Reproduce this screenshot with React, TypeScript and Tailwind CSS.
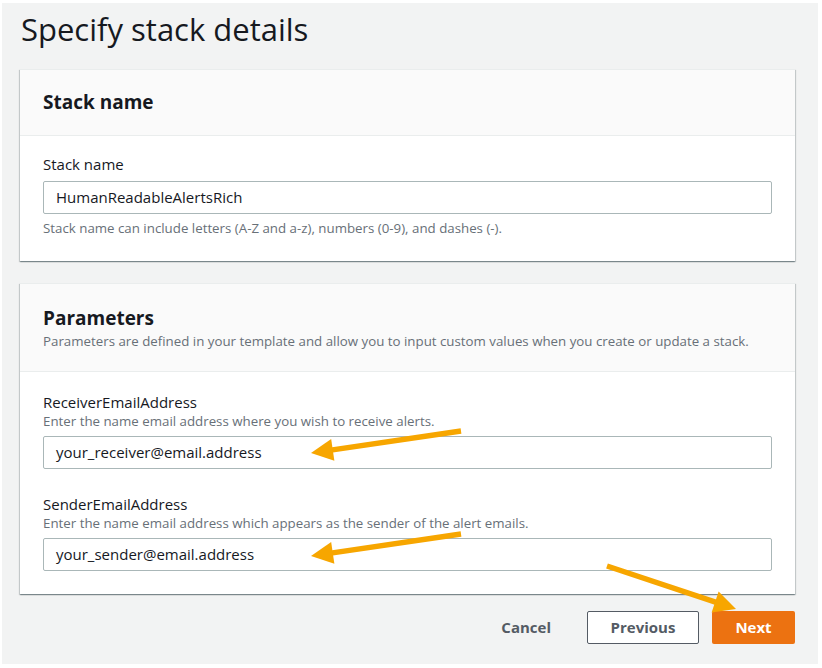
import React from 'react'

type Pt = [number, number]

// orange annotation arrow, tip at `to`
function Arrow({ from, to }: { from: Pt; to: Pt }) {
  const [x1, y1] = from
  const [x2, y2] = to
  const dx = x2 - x1
  const dy = y2 - y1
  const len = Math.sqrt(dx * dx + dy * dy)
  const ux = dx / len
  const uy = dy / len
  const headLen = 22
  const headHalf = 11
  const bx = x2 - ux * headLen
  const by = y2 - uy * headLen
  const p1 = `${bx - uy * headHalf},${by + ux * headHalf}`
  const p2 = `${bx + uy * headHalf},${by - ux * headHalf}`
  return (
    <g>
      <line x1={x1} y1={y1} x2={bx + ux * 2} y2={by + uy * 2} stroke="#f7a600" strokeWidth={5.5} />
      <polygon points={`${x2},${y2} ${p1} ${p2}`} fill="#f7a600" />
    </g>
  )
}

function Field({ label, desc, value }: { label: string; desc?: string; value: string }) {
  return (
    <div className="flex flex-col">
      <div className="text-[15px] leading-[20px] text-[#16191f]">{label}</div>
      {desc && <div className="text-[13.3px] leading-[16px] text-[#687078] mt-px">{desc}</div>}
      <div className="mt-[7px] h-[33px] border border-[#aab7b8] rounded-[2px] bg-white flex items-center px-3 text-[15px] text-[#16191f]">
        {value}
      </div>
    </div>
  )
}

const cardShadow =
  'bg-white shadow-[0_1px_1px_0_rgba(0,28,36,0.3),1px_1px_1px_0_rgba(0,28,36,0.15),-1px_1px_1px_0_rgba(0,28,36,0.15)] border-t border-[#eaeded]'

export default function App() {
  return (
    <div className="relative w-[822px] h-[668px] bg-white pt-[3px] pl-[2px]" style={{ fontFamily: '"Open Sans", "Noto Sans", sans-serif' }}>
      <div className="w-[816px] h-[661px] bg-[#f2f3f3] pl-[18px] pr-[23px] flex flex-col">
        <h1 className="text-[31px] leading-[36px] text-[#16191f] pl-px mt-[8px] mb-[2px]">Specify stack details</h1>

        <div className={`mt-[20px] ${cardShadow}`}>
          <div className="bg-[#fafafa] border-b border-[#eaeded] px-[23px] pt-[19px] pb-[20px]">
            <h2 className="text-[19px] leading-[26px] font-bold text-[#16191f]">Stack name</h2>
          </div>
          <div className="px-[23px] pt-[18px] pb-[25px]">
            <Field label="Stack name" value="HumanReadableAlertsRich" />
            <div className="text-[13.3px] leading-[16px] text-[#687078] mt-[6px]">
              Stack name can include letters (A-Z and a-z), numbers (0-9), and dashes (-).
            </div>
          </div>
        </div>

        <div className={`mt-[22px] ${cardShadow}`}>
          <div className="bg-[#fafafa] border-b border-[#eaeded] px-[23px] pt-[21px] pb-[21px]">
            <h2 className="text-[19px] leading-[26px] font-bold text-[#16191f]">Parameters</h2>
            <p className="text-[13.3px] leading-[18px] text-[#687078] mt-[1px]">
              Parameters are defined in your template and allow you to input custom values when you create or update a stack.
            </p>
          </div>
          <div className="px-[23px] pt-[20px] pb-[23px] flex flex-col gap-[25px]">
            <Field
              label="ReceiverEmailAddress"
              desc="Enter the name email address where you wish to receive alerts."
              value="your_receiver@email.address"
            />
            <Field
              label="SenderEmailAddress"
              desc="Enter the name email address which appears as the sender of the alert emails."
              value="your_sender@email.address"
            />
          </div>
        </div>

        <div className="mt-[17px] flex items-center justify-end gap-[13px]">
          <button className="h-[33px] px-5 text-[15px] font-bold text-[#545b64] mr-[3px]">Cancel</button>
          <button className="h-[33px] w-[112px] border border-[#545b64] rounded-[2px] bg-white text-[15px] font-bold text-[#545b64]">
            Previous
          </button>
          <button className="h-[33px] w-[83px] rounded-[2px] bg-[#ec7211] text-[15px] font-bold text-white">Next</button>
        </div>
      </div>

      <svg className="absolute inset-0 pointer-events-none" width={822} height={668}>
        <Arrow from={[461, 431]} to={[311, 453]} />
        <Arrow from={[461, 534]} to={[311, 556]} />
        <Arrow from={[607, 566]} to={[736, 609]} />
      </svg>
    </div>
  )
}
